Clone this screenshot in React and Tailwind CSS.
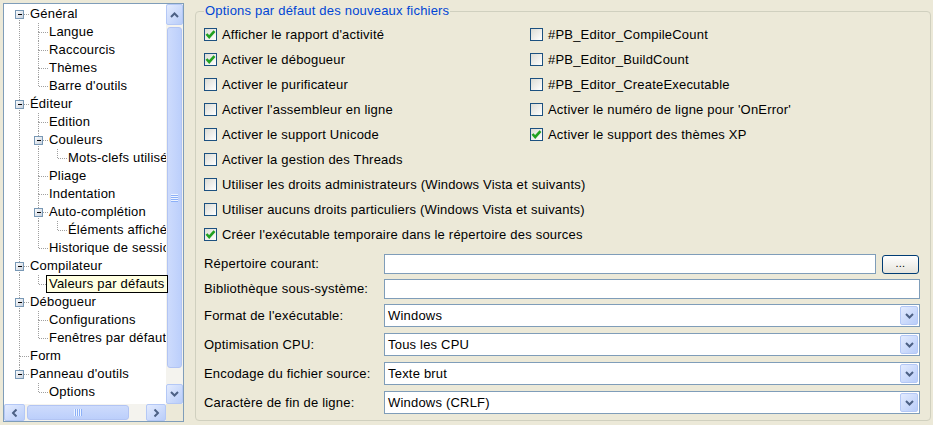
import React from 'react';

const tree = [
  { label: 'Général', level: 0, kids: true },
  { label: 'Langue', level: 1 },
  { label: 'Raccourcis', level: 1 },
  { label: 'Thèmes', level: 1 },
  { label: "Barre d'outils", level: 1 },
  { label: 'Éditeur', level: 0, kids: true },
  { label: 'Edition', level: 1 },
  { label: 'Couleurs', level: 1, kids: true },
  { label: 'Mots-clefs utilisés', level: 2 },
  { label: 'Pliage', level: 1 },
  { label: 'Indentation', level: 1 },
  { label: 'Auto-complétion', level: 1, kids: true },
  { label: 'Éléments affichés', level: 2 },
  { label: 'Historique de session', level: 1 },
  { label: 'Compilateur', level: 0, kids: true },
  { label: 'Valeurs par défauts', level: 1, tip: true },
  { label: 'Débogueur', level: 0, kids: true },
  { label: 'Configurations', level: 1 },
  { label: 'Fenêtres par défaut', level: 1 },
  { label: 'Form', level: 0 },
  { label: "Panneau d'outils", level: 0, kids: true },
  { label: 'Options', level: 1 },
];

// does the node at depth d (row i or its ancestor) have a later sibling?
const continues = (i, d) => {
  for (let j = i + 1; j < tree.length; j++) {
    if (tree[j].level < d) return false;
    if (tree[j].level === d) return true;
  }
  return false;
};

const TreeLines = ({ i, level, kids }) => {
  const w = 26 + level * 19;
  const lines = [];
  for (let d = 0; d <= level; d++) {
    const x = 15.5 + d * 19;
    if (d < level) {
      if (continues(i, d)) lines.push(<line key={'v' + d} x1={x} y1={0} x2={x} y2={18} />);
    } else {
      if (i !== 0) lines.push(<line key="top" x1={x} y1={0} x2={x} y2={9} />);
      if (continues(i, d)) lines.push(<line key="bot" x1={x} y1={9} x2={x} y2={18} />);
      lines.push(<line key="h" x1={x} y1={9.5} x2={x + 10} y2={9.5} />);
    }
  }
  const bx = 11 + level * 19;
  return (
    <svg width={w} height={18} className="shrink-0" shapeRendering="crispEdges">
      <defs>
        <linearGradient id="exp" x1="0" y1="0" x2="1" y2="1">
          <stop offset="0" stopColor="#ffffff" />
          <stop offset="1" stopColor="#c6cfdc" />
        </linearGradient>
      </defs>
      <g stroke="#a0a0a0" strokeDasharray="1 1">{lines}</g>
      {kids && (
        <g>
          <rect x={bx + 0.5} y={5.5} width={8} height={8} fill="url(#exp)" stroke="#7898b5" />
          <line x1={bx + 2.5} y1={9.5} x2={bx + 7} y2={9.5} stroke="#000" />
        </g>
      )}
    </svg>
  );
};

const Chevron = ({ dir = 'down' }) => {
  const rot = { down: 0, up: 180, left: 90, right: -90 }[dir];
  return (
    <svg width="9" height="6" viewBox="0 0 9 6" style={{ transform: `rotate(${rot}deg)` }}>
      <path d="M1 1 L4.5 4.5 L8 1" fill="none" stroke="#4d6185" strokeWidth="2" />
    </svg>
  );
};

const ScrollBtn = ({ dir, className }) => (
  <div
    className={`flex items-center justify-center rounded-[2px] border border-[#b4c8f6] bg-gradient-to-br from-[#e3ebfe] to-[#b9cdf9] ${className}`}
  >
    <Chevron dir={dir} />
  </div>
);

const Checkbox = ({ checked, label }) => (
  <div className="flex items-center h-[25px] gap-[5px] whitespace-nowrap">
    <div className="w-[13px] h-[13px] border border-[#1c5180] bg-gradient-to-br from-[#dcdcd5] to-white flex items-center justify-center shrink-0">
      {checked && (
        <svg width="11" height="11" viewBox="0 0 11 11">
          <path d="M1.5 5 L4.2 8 L9.5 2.2" fill="none" stroke="#21a121" strokeWidth="2.6" />
        </svg>
      )}
    </div>
    <span>{label}</span>
  </div>
);

const SelectBox = ({ value }) => (
  <div className="w-[536px] h-[23px] border border-[#7f9db9] bg-white flex items-center justify-between pl-[3px] pr-[1px]">
    <span>{value}</span>
    <div className="w-[18px] h-[19px] flex items-center justify-center rounded-[2px] border border-[#b4c8f6] bg-gradient-to-br from-[#e3ebfe] to-[#b9cdf9]">
      <Chevron />
    </div>
  </div>
);

const left = [
  ["Afficher le rapport d'activité", true],
  ['Activer le débogueur', true],
  ['Activer le purificateur', false],
  ["Activer l'assembleur en ligne", false],
  ['Activer le support Unicode', false],
  ['Activer la gestion des Threads', false],
  ['Utiliser les droits administrateurs (Windows Vista et suivants)', false],
  ['Utiliser aucuns droits particuliers (Windows Vista et suivants)', false],
  ["Créer l'exécutable temporaire dans le répertoire des sources", true],
];
const right = [
  ['#PB_Editor_CompileCount', false],
  ['#PB_Editor_BuildCount', false],
  ['#PB_Editor_CreateExecutable', false],
  ["Activer le numéro de ligne pour 'OnError'", false],
  ['Activer le support des thèmes XP', true],
];

export default function App() {
  return (
    <div className="w-[933px] h-[425px] bg-[#ece9d8] flex pt-[3px] pl-[3px] overflow-hidden font-['Liberation_Sans',Arial,sans-serif] text-[13px] tracking-[0.2px] text-black">
      {/* Tree */}
      <div className="w-[181px] h-[419px] border border-[#7f9db9] bg-white flex flex-col shrink-0">
        <div className="flex h-[400px]">
          <div className="w-[162px] pt-[1px]">
            {tree.map((n, i) => (
              <div
                key={n.label}
                className={`flex items-center h-[18px] w-[162px] whitespace-nowrap ${n.tip ? 'relative z-10' : 'overflow-hidden'}`}
              >
                <TreeLines i={i} level={n.level} kids={n.kids} />
                {n.tip ? (
                  <span className="-ml-[3px] px-[2px] h-[18px] leading-[16px] border border-black bg-[#ffffe1]">{n.label}</span>
                ) : (
                  <span>{n.label}</span>
                )}
              </div>
            ))}
          </div>
          <div className="w-[17px] flex flex-col bg-[#f4f3ee]">
            <ScrollBtn dir="up" className="h-[21px]" />
            <div className="flex-1 px-[1px] pt-[2px] pb-[16px]">
              <div className="h-full rounded-[3px] border border-[#b2c4f3] bg-gradient-to-r from-[#cddbfc] to-[#bccffb] flex items-center justify-center">
                <svg width="7" height="8" viewBox="0 0 7 8">
                  <g stroke="#eef4fe">
                    <line x1="0" y1="0.5" x2="7" y2="0.5" />
                    <line x1="0" y1="2.5" x2="7" y2="2.5" />
                    <line x1="0" y1="4.5" x2="7" y2="4.5" />
                    <line x1="0" y1="6.5" x2="7" y2="6.5" />
                  </g>
                  <g stroke="#8cb0f8">
                    <line x1="0" y1="1.5" x2="7" y2="1.5" />
                    <line x1="0" y1="3.5" x2="7" y2="3.5" />
                    <line x1="0" y1="5.5" x2="7" y2="5.5" />
                    <line x1="0" y1="7.5" x2="7" y2="7.5" />
                  </g>
                </svg>
              </div>
            </div>
            <ScrollBtn dir="down" className="h-[20px]" />
          </div>
        </div>
        <div className="flex h-[17px]">
          <div className="w-[162px] flex bg-[#f4f3ee]">
            <ScrollBtn dir="left" className="w-[21px]" />
            <div className="flex-1 py-[1px] pl-[2px] pr-[17px]">
              <div className="h-full rounded-[3px] border border-[#b2c4f3] bg-gradient-to-b from-[#cddbfc] to-[#bccffb] flex items-center justify-center">
                <svg width="8" height="7" viewBox="0 0 8 7">
                  <g stroke="#eef4fe">
                    <line x1="0.5" y1="0" x2="0.5" y2="7" />
                    <line x1="2.5" y1="0" x2="2.5" y2="7" />
                    <line x1="4.5" y1="0" x2="4.5" y2="7" />
                    <line x1="6.5" y1="0" x2="6.5" y2="7" />
                  </g>
                  <g stroke="#8cb0f8">
                    <line x1="1.5" y1="0" x2="1.5" y2="7" />
                    <line x1="3.5" y1="0" x2="3.5" y2="7" />
                    <line x1="5.5" y1="0" x2="5.5" y2="7" />
                    <line x1="7.5" y1="0" x2="7.5" y2="7" />
                  </g>
                </svg>
              </div>
            </div>
            <ScrollBtn dir="right" className="w-[20px]" />
          </div>
          <div className="w-[17px] bg-[#ece9d8]" />
        </div>
      </div>

      {/* Options group */}
      <fieldset className="ml-[11px] w-[736px] h-[418px] border border-[#d0d0bf] rounded-[4px] px-[8px] pt-[3px]">
        <legend className="px-[1px] leading-[16px] text-[#0046d5]">Options par défaut des nouveaux fichiers</legend>
        <div className="grid grid-cols-[326px_1fr]">
          {left.map(([l, c], i) => (
            <React.Fragment key={l}>
              <Checkbox label={l} checked={c} />
              {right[i] ? <Checkbox label={right[i][0]} checked={right[i][1]} /> : <div />}
            </React.Fragment>
          ))}
        </div>

        <div className="mt-[7px] flex flex-col">
          <div className="flex items-center h-[20px]">
            <span className="w-[180px]">Répertoire courant:</span>
            <div className="w-[492px] h-[20px] border border-[#7f9db9] bg-white" />
            <button className="ml-[6px] w-[37px] h-[19px] rounded-[3px] border border-[#003c74] bg-gradient-to-b from-white to-[#e6e4dc] text-[11px] leading-none flex items-end justify-center pb-[4px]">
              ...
            </button>
          </div>
          <div className="flex items-center h-[20px] mt-[5px]">
            <span className="w-[180px]">Bibliothèque sous-système:</span>
            <div className="w-[536px] h-[20px] border border-[#7f9db9] bg-white" />
          </div>
          <div className="flex items-center mt-[5px]">
            <span className="w-[180px]">Format de l'exécutable:</span>
            <SelectBox value="Windows" />
          </div>
          <div className="flex items-center mt-[6px]">
            <span className="w-[180px]">Optimisation CPU:</span>
            <SelectBox value="Tous les CPU" />
          </div>
          <div className="flex items-center mt-[6px]">
            <span className="w-[180px]">Encodage du fichier source:</span>
            <SelectBox value="Texte brut" />
          </div>
          <div className="flex items-center mt-[6px]">
            <span className="w-[180px]">Caractère de fin de ligne:</span>
            <SelectBox value="Windows (CRLF)" />
          </div>
        </div>
      </fieldset>
    </div>
  );
}
